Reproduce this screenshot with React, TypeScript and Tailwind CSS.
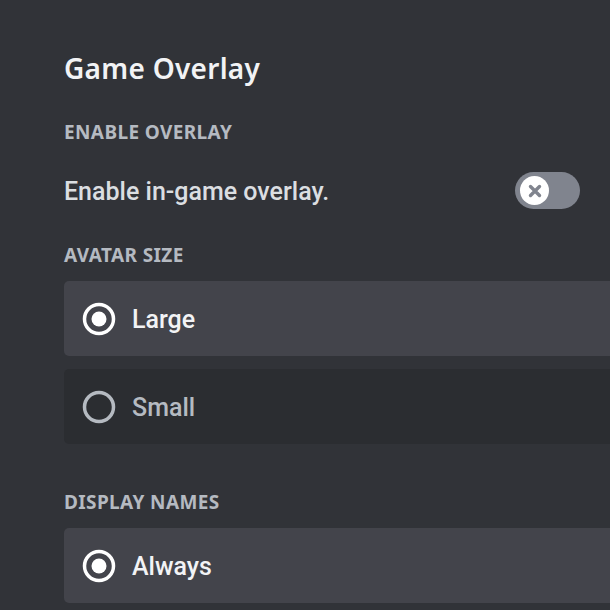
import React, { useState } from 'react';

type Option = { value: string; label: string };

const avatarOptions: Option[] = [
  { value: 'large', label: 'Large' },
  { value: 'small', label: 'Small' },
];

const nameOptions: Option[] = [{ value: 'always', label: 'Always' }];

const bodyFont = { fontFamily: 'Roboto, "Noto Sans", sans-serif' };

const SectionLabel: React.FC<{ children: React.ReactNode }> = ({ children }) => (
  <h3 className="text-[19px] leading-[24px] font-bold tracking-[0.02em] uppercase text-[#b5bac1]">
    {children}
  </h3>
);

const RadioIcon: React.FC<{ checked: boolean }> = ({ checked }) => (
  <svg width="34" height="34" viewBox="0 0 34 34" className="shrink-0">
    <circle
      cx="17"
      cy="17"
      r="14.5"
      fill="none"
      stroke={checked ? '#ffffff' : '#b5bac1'}
      strokeWidth="3.5"
    />
    {checked && <circle cx="17" cy="17" r="7.5" fill="#ffffff" />}
  </svg>
);

const RadioGroup: React.FC<{
  options: Option[];
  value: string;
  onChange: (v: string) => void;
}> = ({ options, value, onChange }) => (
  <div className="flex flex-col gap-[13px]">
    {options.map((opt) => {
      const checked = opt.value === value;
      return (
        <button
          key={opt.value}
          type="button"
          onClick={() => onChange(opt.value)}
          className={`flex h-[75px] w-[620px] items-center gap-[16px] rounded-[5px] px-[18px] text-left ${
            checked ? 'bg-[#43444b] text-[#f2f3f5]' : 'bg-[#2b2d31] text-[#b5bac1]'
          }`}
        >
          <RadioIcon checked={checked} />
          <span className="pt-[3px] text-[25px] leading-[32px] font-medium" style={bodyFont}>
            {opt.label}
          </span>
        </button>
      );
    })}
  </div>
);

const Toggle: React.FC<{ on: boolean; onChange: (v: boolean) => void }> = ({ on, onChange }) => (
  <button
    type="button"
    onClick={() => onChange(!on)}
    className={`flex h-[37px] w-[65px] shrink-0 items-center rounded-full px-[5px] ${
      on ? 'justify-end bg-[#23a55a]' : 'justify-start bg-[#80848e]'
    }`}
  >
    <span className="flex h-[29px] w-[29px] items-center justify-center rounded-full bg-white">
      <svg width="14" height="14" viewBox="0 0 14 14">
        <path
          d="M2.5 2.5 L11.5 11.5 M11.5 2.5 L2.5 11.5"
          stroke="#80848e"
          strokeWidth="3.4"
          strokeLinecap="round"
        />
      </svg>
    </span>
  </button>
);

const App: React.FC = () => {
  const [overlay, setOverlay] = useState(false);
  const [avatar, setAvatar] = useState('large');
  const [names, setNames] = useState('always');

  return (
    <div
      className="h-[610px] w-[610px] overflow-hidden bg-[#313338] pl-16 pt-[50px]"
      style={{ fontFamily: '"Noto Sans", sans-serif' }}
    >
      <h2 className="text-[28px] leading-[36px] font-semibold tracking-[0.01em] text-[#f2f3f5]">
        Game Overlay
      </h2>

      <div className="mt-[34px]">
        <SectionLabel>Enable Overlay</SectionLabel>
        <div className="mt-[28px] flex w-[516px] items-center justify-between">
          <span
            className="pt-[3px] text-[25px] leading-[32px] font-medium text-[#dbdee1]"
            style={bodyFont}
          >
            Enable in-game overlay.
          </span>
          <Toggle on={overlay} onChange={setOverlay} />
        </div>
      </div>

      <div className="mt-[34px]">
        <SectionLabel>Avatar Size</SectionLabel>
        <div className="mt-[14px]">
          <RadioGroup options={avatarOptions} value={avatar} onChange={setAvatar} />
        </div>
      </div>

      <div className="mt-[46px]">
        <SectionLabel>Display Names</SectionLabel>
        <div className="mt-[14px]">
          <RadioGroup options={nameOptions} value={names} onChange={setNames} />
        </div>
      </div>
    </div>
  );
};

export default App;
